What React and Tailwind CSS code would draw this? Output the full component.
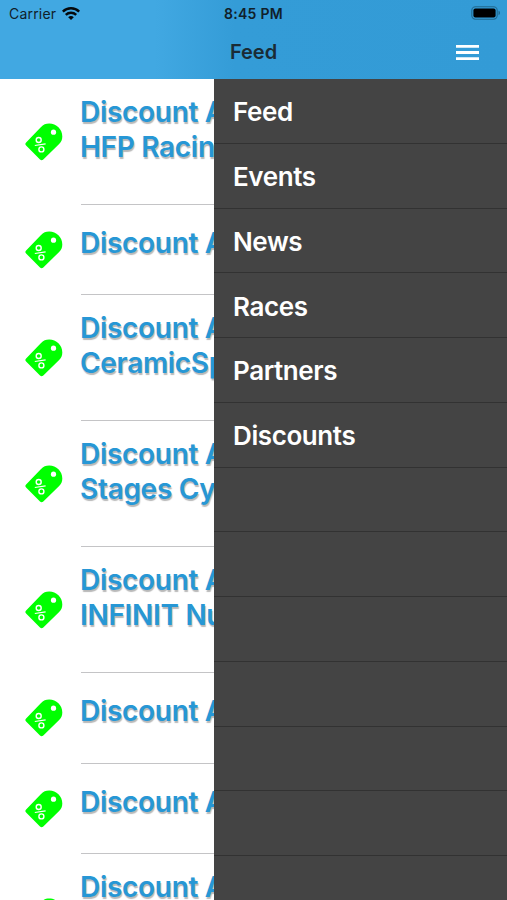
const discounts = [
  ['Discount At', 'HFP Racing'],
  ['Discount At'],
  ['Discount At', 'CeramicSpeed'],
  ['Discount At', 'Stages Cycling'],
  ['Discount At', 'INFINIT Nutrition'],
  ['Discount At'],
  ['Discount At'],
  ['Discount At', ''],
];

const menu = ['Feed', 'Events', 'News', 'Races', 'Partners', 'Discounts', '', '', '', '', '', '', ''];

function Tag() {
  return (
    <svg viewBox="0 0 38 38" className="ml-[25px] h-[38px] w-[38px] shrink-0">
      <path
        d="M1.1 19.4 15.8 4.2C18.4 1.6 20.8.6 24.2.6 31.4.6 37.3 6.4 37.3 13.4c0 3.2-1 5.5-3.4 7.8L18.3 36.4q-1.7 1.5-3.3 0L1.1 22.5q-1.5-1.5 0-3.1Z"
        fill="#00ff00"
      />
      <circle cx="28.5" cy="9.2" r="2.6" fill="#fff" />
      <g fill="none" stroke="#fff" strokeWidth="1.4">
        <circle cx="13.7" cy="17" r="2.5" />
        <circle cx="16.4" cy="26.4" r="2.5" />
        <path d="M9.8 22.5 20.6 20.9" strokeWidth="1.1" />
      </g>
    </svg>
  );
}

function DiscountRow({ lines }) {
  const double = lines.length > 1;
  return (
    <div className={`flex shrink-0 items-center ${double ? 'h-[126px]' : 'h-[90.3px]'}`}>
      <Tag />
      <div
        className={`ml-[18px] h-full w-[420px] shrink-0 border-b border-[#c4c4c6] text-[28px] leading-[34.6px] font-semibold tracking-[-0.3px] whitespace-nowrap text-[#2797d5] [text-shadow:1px_2px_1px_rgba(0,0,0,0.28)] ${double ? 'pt-[16px]' : 'pt-[21px]'}`}
      >
        {lines.map((line, i) => (
          <div key={i} className="-ml-px">{line}</div>
        ))}
      </div>
    </div>
  );
}

export default function App() {
  return (
    <div className="flex h-[900px] w-[507px] flex-col overflow-hidden bg-white font-['Inter','Liberation_Sans',sans-serif]">
      <header className="h-[79px] shrink-0 bg-[linear-gradient(90deg,#41a8e2_0,#41a8e2_155px,#349cd7_235px,#339bd6_100%)]">
        <div className="grid h-[27px] grid-cols-3 items-center text-[#10202a]">
          <div className="flex items-center pl-[9px] text-[14px] tracking-[0.2px]">
            Carrier
            <svg viewBox="0 0 18 13" className="ml-[6px] h-[13px] w-[18px]" fill="none" stroke="#05090c" strokeWidth="2.5">
              <path d="M.8 4.6C5.3.2 12.7.2 17.2 4.6" />
              <path d="M3.8 7.8C6.8 5 11.2 5 14.2 7.8" />
              <path d="M6.2 10.2C7.8 8.7 10.2 8.7 11.8 10.2L9 13Z" fill="#05090c" stroke="none" />
            </svg>
          </div>
          <div className="text-center text-[14px] font-semibold tracking-[0.3px] whitespace-nowrap">8:45 PM</div>
          <svg viewBox="0 0 30 14" className="mr-[6px] mb-px h-[14px] w-[30px] justify-self-end">
            <rect x=".8" y=".8" width="25.4" height="12.4" rx="3.6" fill="none" stroke="#21698f" strokeWidth="1.1" />
            <rect x="2.4" y="2.4" width="22.2" height="9.2" rx="2" fill="#000" />
            <path d="M27.5 4.8c2 .5 2 3.9 0 4.4Z" fill="#21698f" />
          </svg>
        </div>
        <div className="grid h-[50px] grid-cols-[1fr_auto_1fr] items-center">
          <span />
          <h1 className="text-[20px] font-semibold tracking-[0px] text-[#1a2b35]">Feed</h1>
          <svg viewBox="0 0 23 17" className="mr-[28px] h-[17px] w-[23px] justify-self-end" fill="#fff">
            <path d="M0 1h23v2.8H0zM0 7.1h23v2.8H0zM0 13.2h23V16H0z" />
          </svg>
        </div>
      </header>
      <div className="flex min-h-0 flex-1">
        <main className="flex w-[214px] shrink-0 flex-col overflow-hidden">
          {discounts.map((lines, i) => (
            <DiscountRow key={i} lines={lines} />
          ))}
        </main>
        <nav className="flex flex-1 flex-col overflow-hidden bg-[#444]">
          {menu.map((item, i) => (
            <div
              key={i}
              className="flex h-[64.75px] shrink-0 items-center border-b border-[#323232] pt-[2px] pl-[19px] text-[26px] font-semibold tracking-[-0.4px] text-white"
            >
              {item}
            </div>
          ))}
        </nav>
      </div>
    </div>
  );
}
